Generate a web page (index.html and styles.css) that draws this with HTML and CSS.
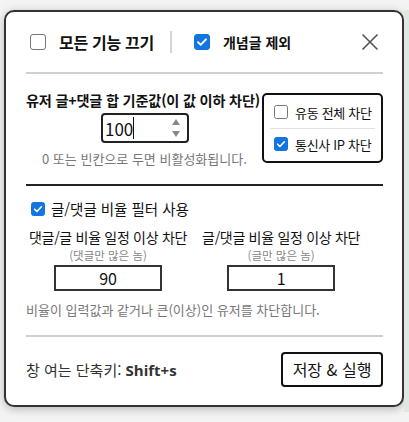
FILE: index.html
```html
<!DOCTYPE html>
<html lang="ko">
<head>
<meta charset="utf-8">
<title>설정</title>
<link rel="stylesheet" href="styles.css">
</head>
<body>
<div class="page">
  <div class="modal">
    <div class="top">
      <span class="cb cb-lg"></span>
      <span class="top-label big">모든 기능 끄기</span>
      <span class="vsep"></span>
      <span class="cb cb-lg on"><svg viewBox="0 0 16 16"><path d="M3.5 8.3l3 3 6-6.3" fill="none" stroke="#fff" stroke-width="2.2" stroke-linecap="round" stroke-linejoin="round"/></svg></span>
      <span class="top-label small">개념글 제외</span>
      <span class="close"><svg viewBox="0 0 18 18"><path d="M1.5 1.5l15 15M16.5 1.5l-15 15" stroke="#555" stroke-width="1.6" fill="none"/></svg></span>
    </div>
    <div class="hr light"></div>

    <div class="sec1">
      <div class="sec1-main">
        <div class="title">유저 글+댓글 합 기준값(이 값 이하 차단)</div>
        <div class="numbox">
          <span class="numval">100</span><span class="caret"></span>
          <span class="spin"><svg viewBox="0 0 10 22"><path d="M5 2l4 6H1z" fill="#888"/><path d="M5 20l4-6H1z" fill="#888"/></svg></span>
        </div>
        <div class="hint">0 또는 빈칸으로 두면 비활성화됩니다.</div>
      </div>
      <div class="sidebox">
        <div class="side-row"><span class="cb cb-sm"></span><span>유동 전체 차단</span></div>
        <div class="side-sep"></div>
        <div class="side-row"><span class="cb cb-sm on"><svg viewBox="0 0 16 16"><path d="M3.5 8.3l3 3 6-6.3" fill="none" stroke="#fff" stroke-width="2.2" stroke-linecap="round" stroke-linejoin="round"/></svg></span><span>통신사 IP 차단</span></div>
      </div>
    </div>
    <div class="hr dark"></div>

    <div class="ratio">
      <div class="ratio-head"><span class="cb cb-sm on"><svg viewBox="0 0 16 16"><path d="M3.5 8.3l3 3 6-6.3" fill="none" stroke="#fff" stroke-width="2.2" stroke-linecap="round" stroke-linejoin="round"/></svg></span><span>글/댓글 비율 필터 사용</span></div>
      <div class="cols">
        <div class="col">
          <div class="col-title">댓글/글 비율 일정 이상 차단</div>
          <div class="col-sub">(댓글만 많은 놈)</div>
          <div class="ratio-input">90</div>
        </div>
        <div class="col">
          <div class="col-title">글/댓글 비율 일정 이상 차단</div>
          <div class="col-sub">(글만 많은 놈)</div>
          <div class="ratio-input">1</div>
        </div>
      </div>
      <div class="note">비율이 입력값과 같거나 큰(이상)인 유저를 차단합니다.</div>
    </div>
    <div class="hr light"></div>

    <div class="footer">
      <div class="shortcut">창 여는 단축키: <b>Shift+s</b></div>
      <button class="save">저장 &amp; 실행</button>
    </div>
  </div>
  <div class="edge"></div>
</div>
</body>
</html>
```
FILE: styles.css
```css
html, body { margin: 0; padding: 0; }
body {
  width: 409px;
  height: 422px;
  overflow: hidden;
  background: #f3f3f3;
  font-family: "Noto Sans CJK KR", "Noto Sans", sans-serif;
  color: #111;
}
.page {
  display: flex;
  padding: 10px 0 0 4px;
  height: 412px;
  box-sizing: border-box;
}
.edge {
  width: 5px;
  background: #dfe9df;
}
.modal {
  width: 400px;
  height: 397px;
  box-sizing: border-box;
  background: #fff;
  border: 2px solid #333;
  border-radius: 10px;
  box-shadow: 0 2px 8px rgba(0,0,0,0.25);
  padding: 0 19px 0 20px;
  display: flex;
  flex-direction: column;
}
.top {
  display: flex;
  align-items: center;
  height: 60px;
}
.cb {
  display: inline-flex;
  align-items: center;
  justify-content: center;
  box-sizing: border-box;
  border: 1.5px solid #767676;
  border-radius: 3px;
  background: #fff;
  flex: none;
}
.cb svg { width: 100%; height: 100%; display: block; }
.cb.on { background: #1276de; border-color: #1276de; }
.cb-lg { width: 16px; height: 16px; margin-left: 4px; }
.cb-sm { width: 14px; height: 14px; border-radius: 2.5px; }
.top-label { font-weight: 700; }
.top-label.big { font-size: 16px; margin-left: 13px; letter-spacing: -0.3px; }
.top-label.small { font-size: 14px; margin-left: 13px; }
.vsep {
  width: 2px;
  height: 22px;
  background: #d4d4d4;
  margin: 0 18px 0 16px;
}
.close {
  margin-left: auto;
  width: 18px;
  height: 18px;
  margin-right: 4px;
}
.close svg { width: 18px; height: 18px; display: block; }
.hr { height: 2px; flex: none; }
.hr.light { background: #d0d0d0; }
.hr.dark { background: #222; }

.sec1 {
  display: flex;
  height: 110px;
  position: relative;
}
.sec1-main { flex: 1; padding-top: 16px; }
.title {
  font-size: 14.2px;
  font-weight: 700;
  white-space: nowrap;
  letter-spacing: -0.2px;
}
.numbox {
  margin: 3px 0 0 75px;
  width: 88px;
  height: 30px;
  box-sizing: border-box;
  border: 2px solid #222;
  border-radius: 4px;
  display: flex;
  align-items: center;
  padding-left: 2px;
}
.numval { font-size: 17px; line-height: 1; }
.caret { width: 1px; height: 22px; background: #111; }
.spin { margin-left: auto; margin-right: 6px; width: 10px; height: 22px; }
.spin svg { width: 10px; height: 22px; display: block; }
.hint {
  margin: 6px 0 0 16px;
  font-size: 13px;
  color: #777;
}
.sidebox {
  position: absolute;
  right: 0;
  top: 19px;
  width: 121px;
  height: 70px;
  box-sizing: border-box;
  border: 2px solid #111;
  border-radius: 5px;
  background: #fff;
  padding: 0 6px;
  display: flex;
  flex-direction: column;
  justify-content: center;
}
.side-row {
  display: flex;
  align-items: center;
  gap: 7px;
  font-size: 13px;
  letter-spacing: -0.3px;
  white-space: nowrap;
  height: 31px;
  padding-left: 4px;
}
.side-sep { height: 1px; background: #e2e2e2; }

.ratio { padding-top: 12px; height: 149px; box-sizing: border-box; }
.ratio-head {
  display: flex;
  align-items: center;
  gap: 6px;
  font-size: 14.5px;
  padding-left: 5px;
}
.cols {
  display: flex;
  gap: 15px;
  margin-top: 8px;
  padding-left: 3px;
}
.col {
  display: flex;
  flex-direction: column;
  align-items: center;
}
.col-title { font-size: 14px; white-space: nowrap; letter-spacing: -0.3px; line-height: 20px; }
.col-sub { font-size: 11.5px; color: #888; line-height: 16px; }
.ratio-input {
  margin-top: 2px;
  width: 108px;
  height: 26px;
  box-sizing: border-box;
  border: 2px solid #333;
  display: flex;
  align-items: center;
  justify-content: center;
  font-size: 16px;
}
.note {
  margin-top: 9px;
  font-size: 13px;
  color: #777;
}
.footer {
  flex: 1;
  display: flex;
  align-items: center;
  justify-content: space-between;
  padding-bottom: 4px;
}
.shortcut { font-size: 15px; color: #333; }
.shortcut b { font-family: "Open Sans", "Noto Sans CJK KR", sans-serif; font-weight: 700; color: #333; }
.save {
  font-family: "Noto Sans CJK KR", sans-serif;
  font-size: 16px;
  color: #111;
  background: #fff;
  border: 2px solid #111;
  border-radius: 4px;
  width: 102px;
  height: 35px;
  padding: 0;
}
```
